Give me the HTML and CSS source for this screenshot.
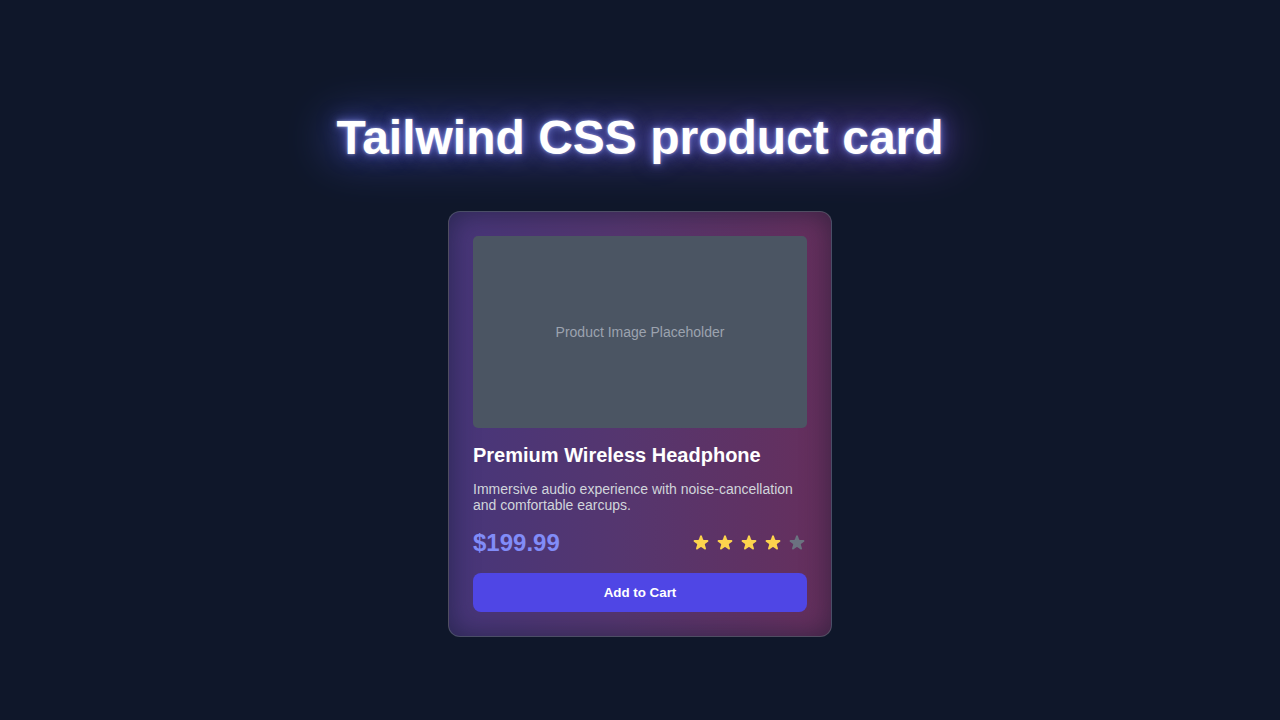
FILE: index.html
```html
<!DOCTYPE html>
<html lang="en">
<head>
<meta charset="utf-8">
<title>Tailwind CSS product card</title>
<link rel="stylesheet" href="styles.css">
</head>
<body>
<main class="page">
  <h1 class="heading"><span class="heading-text">Tailwind CSS product card</span></h1>
  <div class="card">
    <div class="image">Product Image Placeholder</div>
    <h2 class="title">Premium Wireless Headphone</h2>
    <p class="desc">Immersive audio experience with noise-cancellation and comfortable earcups.</p>
    <div class="row">
      <span class="price">$199.99</span>
      <div class="stars">
        <svg class="star on" viewBox="0 0 20 20"><path d="M9.049 2.927c.3-.921 1.603-.921 1.902 0l1.07 3.292a1 1 0 00.95.69h3.462c.969 0 1.371 1.24.588 1.81l-2.8 2.034a1 1 0 00-.364 1.118l1.07 3.292c.3.921-.755 1.688-1.54 1.118l-2.8-2.034a1 1 0 00-1.175 0l-2.8 2.034c-.784.57-1.838-.197-1.539-1.118l1.07-3.292a1 1 0 00-.364-1.118L2.98 8.72c-.783-.57-.38-1.81.588-1.81h3.461a1 1 0 00.951-.69l1.07-3.292z"/></svg>
        <svg class="star on" viewBox="0 0 20 20"><path d="M9.049 2.927c.3-.921 1.603-.921 1.902 0l1.07 3.292a1 1 0 00.95.69h3.462c.969 0 1.371 1.24.588 1.81l-2.8 2.034a1 1 0 00-.364 1.118l1.07 3.292c.3.921-.755 1.688-1.54 1.118l-2.8-2.034a1 1 0 00-1.175 0l-2.8 2.034c-.784.57-1.838-.197-1.539-1.118l1.07-3.292a1 1 0 00-.364-1.118L2.98 8.72c-.783-.57-.38-1.81.588-1.81h3.461a1 1 0 00.951-.69l1.07-3.292z"/></svg>
        <svg class="star on" viewBox="0 0 20 20"><path d="M9.049 2.927c.3-.921 1.603-.921 1.902 0l1.07 3.292a1 1 0 00.95.69h3.462c.969 0 1.371 1.24.588 1.81l-2.8 2.034a1 1 0 00-.364 1.118l1.07 3.292c.3.921-.755 1.688-1.54 1.118l-2.8-2.034a1 1 0 00-1.175 0l-2.8 2.034c-.784.57-1.838-.197-1.539-1.118l1.07-3.292a1 1 0 00-.364-1.118L2.98 8.72c-.783-.57-.38-1.81.588-1.81h3.461a1 1 0 00.951-.69l1.07-3.292z"/></svg>
        <svg class="star on" viewBox="0 0 20 20"><path d="M9.049 2.927c.3-.921 1.603-.921 1.902 0l1.07 3.292a1 1 0 00.95.69h3.462c.969 0 1.371 1.24.588 1.81l-2.8 2.034a1 1 0 00-.364 1.118l1.07 3.292c.3.921-.755 1.688-1.54 1.118l-2.8-2.034a1 1 0 00-1.175 0l-2.8 2.034c-.784.57-1.838-.197-1.539-1.118l1.07-3.292a1 1 0 00-.364-1.118L2.98 8.72c-.783-.57-.38-1.81.588-1.81h3.461a1 1 0 00.951-.69l1.07-3.292z"/></svg>
        <svg class="star off" viewBox="0 0 20 20"><path d="M9.049 2.927c.3-.921 1.603-.921 1.902 0l1.07 3.292a1 1 0 00.95.69h3.462c.969 0 1.371 1.24.588 1.81l-2.8 2.034a1 1 0 00-.364 1.118l1.07 3.292c.3.921-.755 1.688-1.54 1.118l-2.8-2.034a1 1 0 00-1.175 0l-2.8 2.034c-.784.57-1.838-.197-1.539-1.118l1.07-3.292a1 1 0 00-.364-1.118L2.98 8.72c-.783-.57-.38-1.81.588-1.81h3.461a1 1 0 00.951-.69l1.07-3.292z"/></svg>
      </div>
    </div>
    <button class="btn">Add to Cart</button>
  </div>
</main>
</body>
</html>
```

FILE: styles.css
```css
* { box-sizing: border-box; }
html, body {
  margin: 0;
  padding: 0;
  background: #0f172a;
  font-family: "Liberation Sans", Arial, sans-serif;
  color: #fff;
}
.page {
  min-height: 720px;
  display: flex;
  flex-direction: column;
  align-items: center;
  padding-top: 114px;
}
.heading {
  position: relative;
  margin: 0 0 49px;
  font-size: 48px;
  line-height: 48px;
  font-weight: 700;
  color: #fff;
}
.heading::before {
  content: "";
  position: absolute;
  left: -10px;
  right: -10px;
  top: 2px;
  bottom: 2px;
  background: linear-gradient(90deg, #4f5fe0, #8b4fd8);
  filter: blur(22px);
  opacity: 0.38;
  border-radius: 20px;
}
.heading-text {
  position: relative;
  text-shadow: 0 0 3px rgba(224, 231, 255, 0.5), 0 0 9px rgba(129, 140, 248, 0.7), 0 0 20px rgba(99, 102, 241, 0.55);
}
.card {
  width: 384px;
  padding: 24px;
  border: 1px solid rgba(75, 85, 99, 0.8);
  border-radius: 12px;
  background: linear-gradient(90deg, #47367a 0%, #55366f 45%, #662f5c 100%);
  box-shadow: inset 0 0 28px rgba(15, 23, 42, 0.55);
}
.image {
  height: 192px;
  background: #4b5563;
  border-radius: 5px;
  display: flex;
  align-items: center;
  justify-content: center;
  font-size: 14px;
  color: #9ca3af;
}
.title {
  margin: 13px 0 0;
  font-size: 20px;
  line-height: 28px;
  font-weight: 700;
  color: #fff;
}
.desc {
  margin: 12px 0 0;
  font-size: 14px;
  line-height: 16px;
  color: #d1d5db;
}
.row {
  margin-top: 14px;
  display: flex;
  align-items: center;
  justify-content: space-between;
  height: 32px;
}
.price {
  font-size: 24px;
  line-height: 32px;
  font-weight: 700;
  color: #818cf8;
}
.stars {
  display: flex;
  gap: 4px;
}
.star {
  width: 20px;
  height: 20px;
  display: block;
}
.star.on { fill: #fcd34d; }
.star.off { fill: #6b7280; }
.btn {
  margin-top: 14px;
  width: 100%;
  height: 39px;
  border: 0;
  border-radius: 8px;
  background: #4f46e5;
  color: #fff;
  font-family: "Liberation Sans", Arial, sans-serif;
  font-size: 13.333px;
  font-weight: 700;
  display: flex;
  align-items: center;
  justify-content: center;
  cursor: pointer;
}
```
